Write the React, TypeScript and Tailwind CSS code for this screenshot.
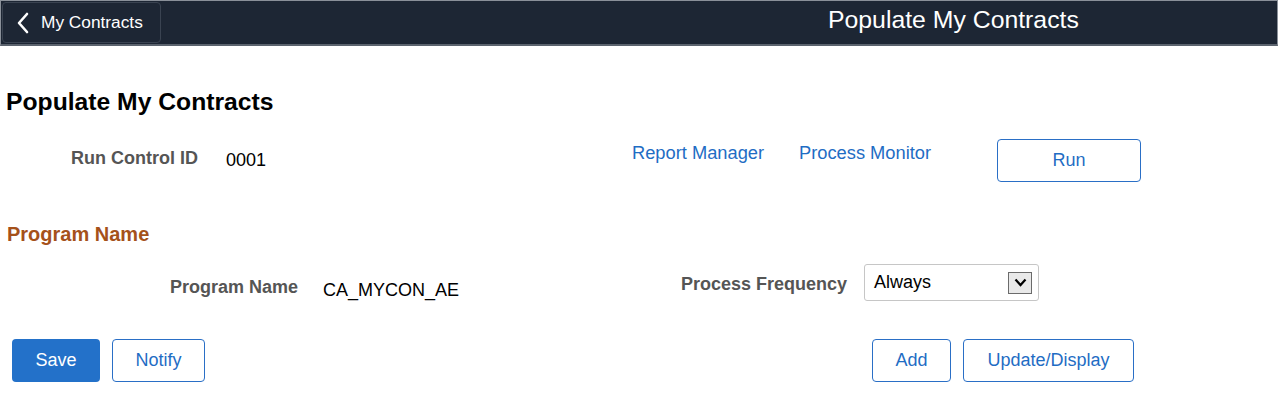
import React from 'react';

const font = { fontFamily: '"Liberation Sans", Arial, sans-serif' };

function OutlineButton({ label, className }: { label: string; className: string }) {
  return (
    <button
      className={`h-[43px] shrink-0 rounded-[4px] border border-[#2a6fc6] bg-white text-[18px] text-[#1f6dc4] ${className}`}
    >
      {label}
    </button>
  );
}

export default function App() {
  return (
    <div className="w-[1278px] h-[403px] bg-white text-black" style={font}>
      {/* banner */}
      <div className="h-[46px] bg-[#1d2634] border-t border-x border-[#8a9099] border-b-2 border-b-[#5b636e] flex items-center relative">
        <button className="ml-[1px] h-[41px] w-[159px] rounded-[4px] border border-[#3a4351] bg-[#1d2634] flex items-center pl-[13px] text-white text-[17.3px]">
          <svg width="14" height="22" viewBox="0 0 14 22" className="mr-[11px]">
            <polyline points="11,2 3,11 11,20" fill="none" stroke="white" strokeWidth="2.6" strokeLinecap="round" strokeLinejoin="round" />
          </svg>
          My Contracts
        </button>
        <div className="absolute left-[827px] top-[4px] text-[24.8px] leading-[30px] text-white">Populate My Contracts</div>
      </div>

      <h1 className="ml-[6px] mt-[42px] text-[24.7px] font-bold leading-[28px]">Populate My Contracts</h1>

      {/* run control row */}
      <div className="flex items-start mt-[23px] h-[43px]">
        <div className="ml-[71px] w-[155px] shrink-0 pt-[10px] text-[18px] leading-[18px] font-bold text-[#555]">Run Control ID</div>
        <div className="w-[406px] shrink-0 pt-[12px] text-[18px] leading-[18px]">0001</div>
        <a className="w-[167px] shrink-0 pt-[5px] text-[18.3px] leading-[18px] text-[#1f6dc4]">Report Manager</a>
        <a className="w-[198px] shrink-0 pt-[5px] text-[18.3px] leading-[18px] text-[#1f6dc4]">Process Monitor</a>
        <OutlineButton label="Run" className="w-[144px]" />
      </div>

      <h2 className="ml-[7px] mt-[41px] text-[20px] leading-[22px] font-bold text-[#a5511a]">Program Name</h2>

      {/* program row */}
      <div className="flex items-start mt-[19px] h-[37px]">
        <div className="ml-[170px] w-[153px] shrink-0 pt-[14px] text-[18px] leading-[18px] font-bold text-[#555]">Program Name</div>
        <div className="w-[358px] shrink-0 pt-[17px] text-[18px] leading-[18px]">CA_MYCON_AE</div>
        <div className="w-[183px] shrink-0 pt-[11px] text-[18px] leading-[18px] font-bold text-[#555]">Process Frequency</div>
        <div className="h-[37px] w-[175px] shrink-0 rounded-[3px] border border-[#c6c6c6] flex items-center justify-between pl-[9px] pr-[6px] text-[18px]">
          <span>Always</span>
          <span className="w-[24px] h-[22px] border border-[#6b6b6b] bg-[#e9e9e9] flex items-center justify-center">
            <svg width="13" height="9" viewBox="0 0 13 9">
              <polyline points="1.5,1.5 6.5,7 11.5,1.5" fill="none" stroke="black" strokeWidth="2.2" />
            </svg>
          </span>
        </div>
      </div>

      {/* action row */}
      <div className="flex items-start mt-[38px]">
        <button className="ml-[12px] h-[43px] w-[88px] shrink-0 rounded-[4px] bg-[#2371c9] text-white text-[18px]">Save</button>
        <OutlineButton label="Notify" className="ml-[12px] w-[93px]" />
        <OutlineButton label="Add" className="ml-[667px] w-[79px]" />
        <OutlineButton label="Update/Display" className="ml-[12px] w-[171px]" />
      </div>
    </div>
  );
}
